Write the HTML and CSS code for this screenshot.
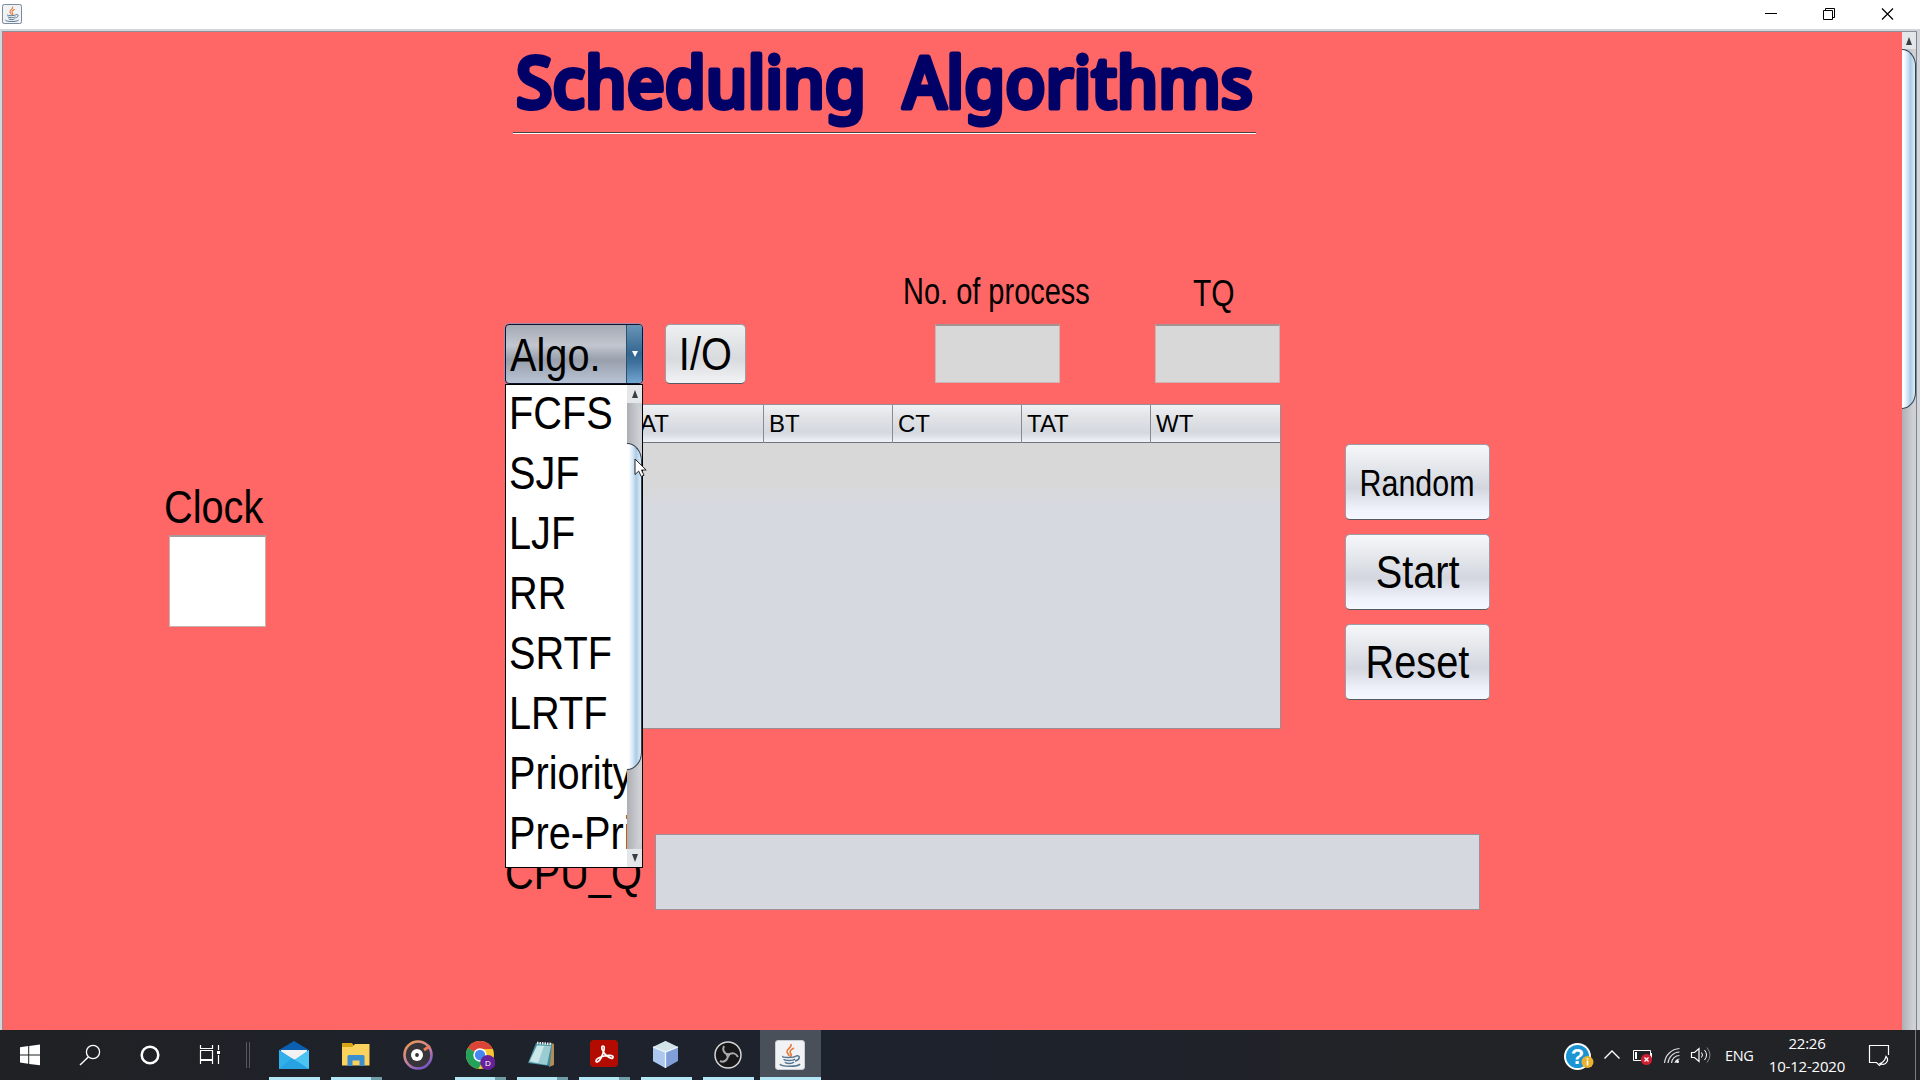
FILE: index.html
```
<!DOCTYPE html>
<html lang="en">
<head>
<meta charset="utf-8">
<title>Scheduling Algorithms</title>
<link rel="stylesheet" href="styles.css">
</head>
<body>
<svg class="defs" width="0" height="0">
  <symbol id="java" viewBox="0 0 30 30">
    <rect x=".5" y=".5" width="29" height="29" rx="2.5" fill="#f1f2f4" stroke="#c9ccd2"/>
    <path d="M16 4c1 4-5 5-4 8 .5 2 2 2 2 4M19 8c-4 2-5 4-3 6 1 1 0 2-1 3" fill="none" stroke="#e8773a" stroke-width="1.6"/>
    <path d="M8 16c-2 2 11 2 13 0M9 19c0 2 9 2 11 0M10 22c1 2 7 2 9 0M5 24c1 3 18 3 20 0M21 16c5-1 4 4-1 5" fill="none" stroke="#55758f" stroke-width="1.5"/>
  </symbol>
</svg>

<header class="titlebar">
  <svg class="app-icon" width="20" height="20" viewBox="0 0 20 20"><use href="#java" width="20" height="20"/><rect x=".5" y=".5" width="19" height="19" rx="2" fill="none" stroke="#7d8ba0"/></svg>
  <div class="window-buttons">
    <svg width="58" height="28" viewBox="0 0 58 28"><path d="M23 13.5h12" stroke="#000"/></svg>
    <svg width="58" height="28" viewBox="0 0 58 28"><path d="M23.5 10.500h9v9h-9zM25.500 10.500v-2h9v9h-2" fill="none" stroke="#000"/></svg>
    <svg width="58" height="28" viewBox="0 0 58 28"><path d="M24 8.500l11 11m0-11l-11 11" stroke="#000" stroke-width="1.200"/></svg>
  </div>
</header>

<div class="frame">
  <main class="panel">
    <div class="heading">
      <svg class="heading-text" width="743" height="100" viewBox="0 0 743 100" role="heading">
        <text x="3" y="76" textLength="350" lengthAdjust="spacingAndGlyphs">Scheduling</text>
        <text x="390" y="76" textLength="350" lengthAdjust="spacingAndGlyphs">Algorithms</text>
      </svg>
    </div>

    <div class="labels">
      <span class="label-process"><span class="narrow">No. of process</span></span>
      <span class="label-tq"><span class="narrow">TQ</span></span>
    </div>

    <div class="controls">
      <div class="combo">
        <div class="combo-value"><span class="narrow">Algo.</span></div>
        <div class="combo-arrow"><i></i></div>
        <div class="popup">
          <ul>
            <li><span class="narrow">FCFS</span></li>
            <li><span class="narrow">SJF</span></li>
            <li><span class="narrow">LJF</span></li>
            <li><span class="narrow">RR</span></li>
            <li><span class="narrow">SRTF</span></li>
            <li><span class="narrow">LRTF</span></li>
            <li><span class="narrow">Priority</span></li>
            <li><span class="narrow">Pre-Pri</span></li>
          </ul>
          <div class="scrollbar popup-scroll">
            <div class="step up"></div>
            <div class="track"><div class="thumb"></div></div>
            <div class="step down"></div>
          </div>
        </div>
        <svg class="cursor" width="14" height="22" viewBox="0 0 14 22"><path d="M1 1v15.500l3.700-3.400 2.500 5.400 2.800-1.200-2.500-5.300h4.700z" fill="#fff" stroke="#222" stroke-width="1"/></svg>
      </div>
      <button class="btn io"><span class="narrow">I/O</span></button>
      <div class="field process"></div>
      <div class="field tq"></div>
    </div>

    <div class="workspace">
      <section class="clock">
        <span class="clock-label"><span class="narrow">Clock</span></span>
        <div class="clock-box"></div>
      </section>
      <section class="table">
        <div class="thead">
          <span></span><span>AT</span><span>BT</span><span>CT</span><span>TAT</span><span>WT</span>
        </div>
        <div class="tbody"></div>
      </section>
      <section class="actions">
        <button class="btn random"><span class="narrow">Random</span></button>
        <button class="btn"><span class="narrow">Start</span></button>
        <button class="btn"><span class="narrow">Reset</span></button>
      </section>
    </div>

    <div class="queue">
      <span class="queue-label"><span class="narrow">CPU_Q</span></span>
      <div class="queue-box"></div>
    </div>
  </main>
  <div class="scrollbar main-scroll">
    <div class="step up"></div>
    <div class="track"><div class="thumb"></div></div>
  </div>
</div>

<footer class="taskbar">
  <div class="system">
    <svg viewBox="0 0 60 50"><path d="M20 17.300l8.200-1.200v8.300H20zM29.200 16L40 14.600v9.800H29.200zM20 25.500h8.200v8.300L20 32.600zM29.200 25.500H40v9.700L29.200 33.900z" fill="#fff"/></svg>
    <svg viewBox="0 0 60 50"><circle cx="33" cy="22" r="6.600" fill="none" stroke="#fff" stroke-width="1.300"/><path d="M28.300 27L20 35" stroke="#fff" stroke-width="1.400"/></svg>
    <svg viewBox="0 0 60 50"><circle cx="30" cy="25" r="8.300" fill="none" stroke="#fff" stroke-width="2.500"/></svg>
    <svg viewBox="0 0 60 50"><path d="M20.500 15v3.500h12V15M20.500 20.500h12v9h-12zM20.500 34v-3.500h12V34M38.500 15v5M38.500 25v9" fill="none" stroke="#fff" stroke-width="1.200"/><path d="M37 21h3v3h-3z" fill="#fff"/></svg>
  </div>
  <div class="divider"></div>
  <div class="apps">
    <div class="app running">
      <svg viewBox="0 0 30 30"><path d="M0 10L15 1l15 9v5H0z" fill="#0a5fb0"/><path d="M2 10h26v12H2z" fill="#f2f2f2"/><path d="M0 10l15 11L30 10v19H0z" fill="#28a8ea"/><path d="M15 20L30 10v19z" fill="#4cc4f3"/><path d="M0 10l30 19H0z" fill="#2fb0ea"/><path d="M13 18.200L30 29H0z" fill="#2499dd" opacity=".6"/></svg>
    </div>
    <div class="app running stacked">
      <svg viewBox="0 0 30 30"><path d="M1 3h10l2 3h15v19H1z" fill="#d9a514"/><path d="M1 7h10l3-3h14.500v21.500H1z" fill="#fbd25d"/><path d="M6.500 26V16.500q0-1.500 1.500-1.500h14q1.500 0 1.500 1.500V26h-5v-5.500h-7V26z" fill="#3b8fd1"/></svg>
    </div>
    <div class="app">
      <svg viewBox="0 0 30 30"><defs><linearGradient id="ring" x1="0" y1="0" x2=".6" y2="1"><stop stop-color="#f29a4b"/><stop offset=".6" stop-color="#c584a3"/><stop offset="1" stop-color="#7f58c5"/></linearGradient></defs><circle cx="15" cy="15" r="13.500" fill="#38353a" stroke="url(#ring)" stroke-width="2.600"/><path d="M21 10l6-4" stroke="#e87d59" stroke-width="3"/><circle cx="14" cy="15" r="6" fill="#fff"/><circle cx="14" cy="15" r="1.900" fill="#333"/></svg>
    </div>
    <div class="app running stacked">
      <svg viewBox="0 0 30 30"><circle cx="15" cy="15" r="14" fill="#fbc52f"/><path d="M15 15L2.900 8A14 14 0 0 1 27.600 9H15z" fill="#dc4437"/><path d="M15 15L2.900 8A14 14 0 0 0 13 28.900l7-11z" fill="#23a25b"/><circle cx="15" cy="15" r="6.700" fill="#fff"/><circle cx="15" cy="15" r="5.200" fill="#4687f1"/><circle cx="22.800" cy="22.500" r="7.500" fill="#67229a"/><text x="22.800" y="25.500" class="badge-letter">D</text></svg>
    </div>
    <div class="app running stacked">
      <svg viewBox="0 0 30 30"><path d="M24 3l3 1v21l-5 2z" fill="#b58c55"/><path d="M9 3l16 1-2 22L1 23z" fill="#438d9b"/><path d="M10 5l14 1-4 19-18-3z" fill="#9bcbd3"/><path d="M10 6L3 21l8 2 6-17z" fill="#cce7e8"/><path d="M10 3l15 1" stroke="#e9eef0" stroke-width="2.500" stroke-dasharray="1.500 1"/></svg>
    </div>
    <div class="app running stacked">
      <svg viewBox="0 0 30 30"><rect x="1" y="0" width="28" height="27" rx="4" fill="#b30b00"/><path d="M14 6c-3 0 0 7 4 10s6 3 6 1-5-2-9-1-8 3-8 5 3 1 5-3 5-12 2-12z" fill="none" stroke="#fff" stroke-width="1.700"/></svg>
    </div>
    <div class="app running">
      <svg viewBox="0 0 30 30"><path d="M14.500 1l12.500 6v14l-12.500 7L2 21V7z" fill="#819ed8"/><path d="M2 7l12.500 5v16L2 21z" fill="#adc8ef"/><path d="M14.500 1L27 7l-12.500 5L2 7z" fill="#d4e3e7"/><path d="M2 7l12.500 5L27 7M14.500 12v16" fill="none" stroke="#edf6ff" stroke-width="1.300"/></svg>
    </div>
    <div class="app running">
      <svg viewBox="0 0 30 30"><circle cx="15" cy="15" r="13" fill="#171719" stroke="#d5d5d5" stroke-width="1.500"/><path d="M15 15c-4-2-6-5-4-9M15 15c4-3 8-2 10 2M15 15c0 5-4 8-8 6" fill="none" stroke="#a8a8a8" stroke-width="2"/><circle cx="15" cy="15" r="2" fill="#a8a8a8"/></svg>
    </div>
    <div class="app running active">
      <svg viewBox="0 0 30 30"><use href="#java" width="30" height="30"/></svg>
    </div>
  </div>
  <div class="tray">
    <svg width="32" height="32" viewBox="0 0 32 32"><circle cx="14.500" cy="16.500" r="13.500" fill="#fff"/><circle cx="14.500" cy="16.500" r="11.500" fill="#1a94d2"/><text x="14.500" y="24" class="help-mark">?</text><circle cx="24.500" cy="22" r="6" fill="#eab22e"/><path d="M24.500 18v1.500m0 1v5" stroke="#fff" stroke-width="1.600"/></svg>
    <svg width="18" height="32" viewBox="0 0 18 32"><path d="M1.500 18.500L9 11l7.500 7.500" fill="none" stroke="#fff" stroke-width="1.400"/></svg>
    <svg width="22" height="32" viewBox="0 0 22 32"><path d="M1.500 10.500h17v10h-17zM19.500 13v5" fill="none" stroke="#fff"/><path d="M3 12h2v7H3z" fill="#fff"/><circle cx="14.500" cy="19.500" r="5.500" fill="#cf2031"/><path d="M12.500 17.500l4 4m0-4l-4 4" stroke="#fff" stroke-width="1.300"/></svg>
    <svg width="18" height="32" viewBox="0 0 18 32"><path d="M1.500 23A16 16 0 0 1 16.500 8.500M5 23A12 12 0 0 1 16.500 12M8.500 23A8 8 0 0 1 16.500 15.500M12 23a5 5 0 0 1 4.500-4" fill="none" stroke="#ddd" stroke-width="1.200"/><circle cx="14.500" cy="21.500" r="1.500" fill="#fff"/></svg>
    <svg width="22" height="32" viewBox="0 0 22 32"><path d="M1.500 12.500h3L9 8.500v13l-4.500-4h-3z" fill="none" stroke="#fff" stroke-width="1.200"/><path d="M11.500 12.500q2 2.500 0 5M14.500 10q4 5 0 10" fill="none" stroke="#fff"/><path d="M17 7.500q6 7.500 0 15" fill="none" stroke="#888"/></svg>
    <span class="lang">ENG</span>
    <div class="datetime"><span>22:26</span><span>10-12-2020</span></div>
    <svg class="notice" width="22" height="32" viewBox="0 0 22 32"><path d="M20.500 16V6.500h-19v17h7l3 3 2-2" fill="none" stroke="#fff" stroke-width="1.200"/><path d="M18 17.500c-1 4-3 6-6 7 5 3 10-3 6-7z" fill="none" stroke="#fff" stroke-width="1.200"/></svg>
  </div>
</footer>
</body>
</html>
```
FILE: styles.css
```
* { box-sizing: border-box; }
body {
  margin: 0; width: 1920px; height: 1080px; overflow: hidden;
  display: flex; flex-direction: column;
  font-family: "Liberation Sans", Arial, sans-serif; color: #000; background: #fff;
}
.defs { position: absolute; }
svg { display: block; flex: none; }
.narrow { display: inline-block; transform: scaleX(.845); transform-origin: left center; white-space: nowrap; }

.titlebar { height: 29px; flex: none; display: flex; justify-content: space-between; background: #fff; }
.app-icon { margin: 4px 0 0 2px; }
.window-buttons { display: flex; padding-right: 4px; }

.frame {
  height: 1001px; flex: none; display: flex; padding: 2px 3px 0 2px; background: #d2d6dc;
}
.panel {
  width: 1900px; flex: none; background: #f66; border: solid #8e8e96; border-width: 1px 0 0 1px;
}

.heading { margin-left: 510px; width: 743px; height: 102px; border-bottom: 1px solid #fff; }
.heading-text { border-bottom: 1px solid #444; height: 101px; overflow: visible; }
.heading text {
  font: 500 70px "Comic Sans MS", "Noto Sans", sans-serif;
  fill: #000066; stroke: #000066; stroke-width: 5px; stroke-linejoin: round; stroke-linecap: round;
}

.labels { margin-top: 130px; height: 60px; display: flex; font-size: 36px; line-height: 42px; }
.labels .narrow { transform: scaleX(.805); }
.label-process { margin-left: 900px; width: 290px; padding-top: 7px; }
.label-tq { padding-top: 9px; }
.label-tq .narrow { transform: scaleX(.83); }

.controls { display: flex; height: 60px; padding-left: 502px; }
.combo {
  position: relative; width: 138px; height: 60px; display: flex; overflow: visible;
  border: 1px solid #11132a; border-radius: 4px; box-shadow: 0 0 0 1px #a98aa9;
  background: linear-gradient(#a4a9b4, #c1c6cf 35%, #999fab 60%, #b8c4d6);
}
.combo-value { width: 121px; height: 58px; padding-left: 4px; font-size: 47px; line-height: 60px; border-right: 1px solid #28506f; }
.combo-arrow { width: 15px; border-radius: 0 3px 3px 0; background: linear-gradient(#6994b8, #336690 50%, #3e719b 65%, #72a6d2); display: flex; align-items: center; justify-content: center; }
.combo-arrow i { border: 3px solid transparent; border-top: 6px solid #fff; border-bottom: 0; }
.popup {
  position: absolute; z-index: 2; left: -1px; top: 59px; width: 138px; height: 484px;
  border: 1px solid #000; background: #fff; display: flex;
}
.popup ul { list-style: none; margin: 0; padding: 0 0 0 3px; width: 121px; overflow: hidden; font-size: 47px; }
.popup li { height: 60px; line-height: 56px; }
.cursor { position: absolute; z-index: 3; left: 128px; top: 133px; }

.btn {
  border: 1px solid #9b9ea6; border-bottom-color: #555a64; border-radius: 5px; padding: 0;
  background: linear-gradient(#f6f7f9, #dfe2e7 38%, #d3d6de 58%, #f0f3fb 88%, #f5f8ff);
  font: 47px/60px "Liberation Sans", Arial, sans-serif; color: #000;
  display: flex; align-items: center; justify-content: center;
}
.btn .narrow { transform-origin: center; margin: 0 -12px; }
.io { margin-left: 22px; width: 81px; height: 60px; background: linear-gradient(#eff0f1, #d8dade 58%, #f1f3f7); }
.field { width: 125px; height: 59px; background: #d8d8d8; border: 1px solid #d0b4b4; border-top: 2px solid #a29292; }
.process { margin-left: 189px; }
.tq { margin-left: 95px; }

.workspace { display: flex; height: 450px; padding: 20px 0 0 161px; }
.clock { width: 341px; padding-top: 79px; }
.clock-label { display: block; height: 52px; line-height: 48px; font-size: 47px; }
.clock-box { margin-left: 5px; width: 97px; height: 92px; background: #fff; border: 1px solid #c4b2b2; border-top: 2px solid #a79999; }
.table { width: 776px; height: 325px; border: 1px solid #9b8d94; border-left: 0; }
.thead {
  height: 38px; display: grid; grid-template-columns: 130px repeat(5, 129px); border-bottom: 1px solid #6e727b;
  background: linear-gradient(#f0f1f4, #e0e2e6 35%, #d4d8df 75%, #f0f3f8);
  font-size: 24px; line-height: 38px;
}
.thead span { padding-left: 5px; border-right: 1px solid #858a94; }
.thead span:last-child { border-right: 0; }
.tbody { height: 285px; background: linear-gradient(#d8d8d8 0 40px, #d6d9df 62px); }
.actions { margin-left: 64px; padding-top: 40px; display: flex; flex-direction: column; gap: 14px; }
.actions .btn { width: 145px; height: 76px; }
.actions .random { font-size: 36px; padding-top: 3px; }

.queue { display: flex; padding-left: 502px; height: 76px; }
.queue-label { width: 150px; font-size: 47px; line-height: 77px; }
.queue-box { width: 825px; height: 76px; background: #d5d8df; border: 1px solid #9d9199; }

.scrollbar { display: flex; flex-direction: column; width: 15px; flex: none; background: #c9ccd1; }
.step { height: 18px; flex: none; background: #e4e7ea; display: flex; align-items: center; justify-content: center; }
.step::before { content: ""; border: 3.5px solid transparent; }
.up::before { border-bottom: 8px solid #3a3d42; border-top: 0; }
.down::before { border-top: 8px solid #3a3d42; border-bottom: 0; }
.track { flex: 1; background: linear-gradient(90deg, #adafb5, #ced0d5 80%); }
.thumb {
  border: 1px solid #35414e; border-left: 0; border-radius: 0 15px 15px 0 / 0 18px 18px 0;
  background: linear-gradient(90deg, #fff 0 12%, #d6e8f8 40%, #aecbe2 65%, #d9eefc);
}
.popup-scroll .track { border-radius: 0 10px 10px 0; padding-top: 40px; }
.popup-scroll .thumb { height: 327px; }
.main-scroll { width: 15px; border-top: 1px solid #8e8e96; border-right: 1px solid #7e8289; }
.main-scroll .step { height: 17px; }
.main-scroll .thumb { height: 360px; width: 14px; }

.taskbar { height: 50px; flex: none; display: flex; background: linear-gradient(90deg, #202124, #1d222c 30%, #1d222c 50%, #222327 75%); color: #fff; }
.system { display: flex; }
.system svg { width: 60px; height: 50px; }
.divider { width: 4px; height: 26px; margin: 12px 14px 0 6px; border: solid #55585d; border-width: 0 1px; }
.apps { display: flex; }
.app { width: 62px; height: 50px; padding: 10px 16px 0 15px; }
.app svg { width: 30px; height: 30px; }
.running { background: linear-gradient(#b3e7f6, #b3e7f6) 5px 47px / 51px 3px no-repeat; }
.stacked { background: linear-gradient(90deg, #b3e7f6 40px, #719da9 40px) 5px 47px / 51px 3px no-repeat; }
.active { background: linear-gradient(#4a505a 47px, #b3e7f6 47px) 0 0 / 61px 50px no-repeat; }
.badge-letter { font: 8px "Liberation Sans", sans-serif; fill: #fff; text-anchor: middle; }
.help-mark { font: bold 22px "Liberation Sans", sans-serif; fill: #fff; text-anchor: middle; }
.tray { margin-left: auto; width: 357px; display: flex; align-items: flex-start; padding-top: 10px; font-family: "Open Sans", "Noto Sans", sans-serif; }
.tray svg:nth-child(2) { margin-left: 8px; }
.tray svg:nth-child(3) { margin-left: 11px; }
.tray svg:nth-child(4) { margin-left: 9px; }
.tray svg:nth-child(5) { margin-left: 9px; }
.lang { margin-left: 13px; width: 30px; font-size: 14.5px; line-height: 31px; letter-spacing: -.4px; }
.datetime { width: 80px; margin: -8px 0 0 12px; display: flex; flex-direction: column; align-items: center; font-size: 15px; line-height: 23px; letter-spacing: -.2px; white-space: nowrap; }
.notice { margin: -1px 0 0 21px; }
.tray::after { content: ""; width: 1px; height: 50px; margin: -10px 0 0 25px; background: #7a7b7e; }
```
